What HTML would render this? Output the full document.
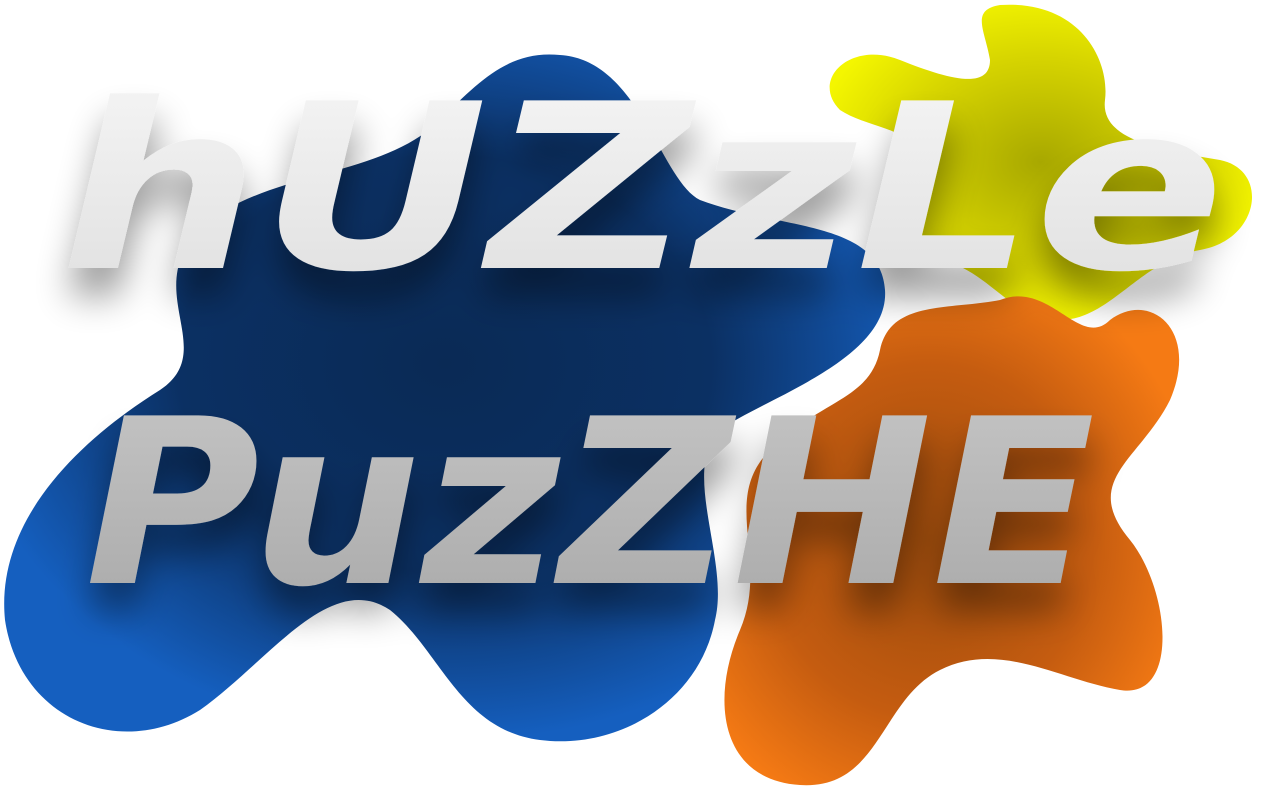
<!DOCTYPE html>
<html><head><meta charset="utf-8"><style>
html,body{margin:0;padding:0;background:#fff;width:1280px;height:806px;overflow:hidden}
svg{display:block}
text{font-family:"DejaVu Sans","Liberation Sans",sans-serif;font-style:italic;font-weight:bold}
</style></head><body>
<svg width="1280" height="806" viewBox="0 0 1280 806" xmlns="http://www.w3.org/2000/svg">
<defs>
<radialGradient id="gb" cx="0.5" cy="0.45" r="0.55">
<stop offset="0" stop-color="#0a2a55"/><stop offset="0.55" stop-color="#0b3063"/><stop offset="1" stop-color="#155fbf"/></radialGradient>
<radialGradient id="gy" cx="0.5" cy="0.5" r="0.55">
<stop offset="0" stop-color="#a8a800"/><stop offset="0.6" stop-color="#d6d400"/><stop offset="1" stop-color="#f4f600"/></radialGradient>
<radialGradient id="go" cx="0.45" cy="0.5" r="0.6">
<stop offset="0" stop-color="#9a4a0c"/><stop offset="0.6" stop-color="#c55c10"/><stop offset="1" stop-color="#f57a14"/></radialGradient>
<linearGradient id="t1" x1="0" y1="0" x2="0" y2="1"><stop offset="0" stop-color="#f6f6f6"/><stop offset="1" stop-color="#dedede"/></linearGradient>
<linearGradient id="t2" x1="0" y1="0" x2="0" y2="1"><stop offset="0" stop-color="#c6c6c6"/><stop offset="1" stop-color="#a8a8a8"/></linearGradient>
<filter id="sh" x="-20%" y="-30%" width="140%" height="180%"><feGaussianBlur in="SourceAlpha" stdDeviation="18"/><feOffset dx="0" dy="28"/><feComponentTransfer><feFuncA type="linear" slope="0.4"/></feComponentTransfer><feMerge><feMergeNode/><feMergeNode in="SourceGraphic"/></feMerge></filter>
</defs>
<path fill="url(#gb)" d="M560 55 C640 60 660 180 700 200 C780 230 880 220 885 290 C890 360 760 400 720 430 C680 470 730 560 715 620 C700 700 620 750 540 740 C460 730 440 650 390 610 C330 570 270 660 200 710 C120 760 20 720 5 620 C-5 520 80 440 160 390 C220 350 140 290 200 230 C260 170 380 180 440 120 C480 80 510 50 560 55 Z"/>
<path fill="url(#gy)" d="M1000 5 C1080 0 1110 60 1105 100 C1100 140 1160 150 1220 160 C1270 170 1260 240 1200 250 C1140 260 1110 320 1060 320 C1010 320 990 270 940 260 C890 250 860 200 900 160 C930 130 870 130 840 110 C810 80 850 40 900 60 C950 80 990 90 990 60 C985 30 970 10 1000 5 Z"/>
<path fill="url(#go)" d="M1000 300 C1050 280 1080 350 1110 320 C1150 290 1200 330 1170 400 C1140 460 1080 480 1130 540 C1170 590 1180 700 1120 690 C1060 680 1000 640 940 670 C880 700 880 790 800 785 C720 780 710 700 740 630 C770 560 720 500 770 450 C820 400 870 400 880 350 C890 300 950 310 1000 300 Z"/>
<g filter="url(#sh)">
<text x="60" y="268" font-size="230" fill="url(#t1)" textLength="1165" lengthAdjust="spacingAndGlyphs">hUZzLe</text>
<text x="85" y="583" font-size="230" fill="url(#t2)" textLength="1010" lengthAdjust="spacingAndGlyphs">PuzZHE</text>
</g>
</svg>
</body></html>
